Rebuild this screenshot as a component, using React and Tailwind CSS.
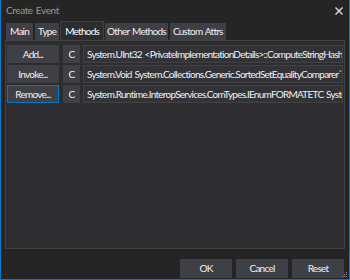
import React from "react";

const rows = [
  { label: "Add...", text: "System.UInt32 <PrivateImplementationDetails>::ComputeStringHash(System.String)" },
  { label: "Invoke...", text: "System.Void System.Collections.Generic.SortedSetEqualityComparer`1::.ctor()" },
  { label: "Remove...", text: "System.Runtime.InteropServices.ComTypes.IEnumFORMATETC System.Object", focused: true },
];

function App() {
  return (
    <div
      className="relative w-[350px] h-[280px] flex flex-col bg-[#252526] border-x border-b border-[#007acc] text-[10px] tracking-[-0.75px] [word-spacing:1px] text-[#f1f1f1] overflow-hidden"
      style={{ fontFamily: "Lato, 'DejaVu Sans', sans-serif" }}
    >
      <div className="h-[21px] shrink-0 flex items-center justify-between pl-[5px] pr-[6px] bg-[#252526]">
        <span className="text-[#999999] text-[10px] tracking-[-0.4px]">Create Event</span>
        <svg width="8" height="8" viewBox="0 0 8 8" className="text-[#e0e0e0]">
          <path d="M0.5 0.5 L7.5 7.5 M7.5 0.5 L0.5 7.5" stroke="currentColor" strokeWidth="1.4" />
        </svg>
      </div>

      <div className="flex-1 flex flex-col px-[4px]">
        <div className="flex items-end h-[19px] pl-[1px]">
          <div className="h-[17px] px-[4px] mr-[2px] flex items-center bg-[#3f3f46]">Main</div>
          <div className="h-[17px] px-[3px] mr-[1px] flex items-center bg-[#3f3f46]">Type</div>
          <div className="h-[19px] px-[4px] mr-[1px] flex items-center bg-[#2d2d30] border-x border-t border-[#3f3f46] text-white">
            Methods
          </div>
          <div className="h-[17px] px-[2px] mr-[2px] flex items-center bg-[#3f3f46]">Other Methods</div>
          <div className="h-[17px] px-[3px] flex items-center bg-[#3f3f46]">Custom Attrs</div>
        </div>

        <div className="h-[209px] border border-[#434346] bg-[#2d2d30] flex flex-col gap-[2px] pt-[4px] px-[1px]">
          {rows.map((r) => (
            <div key={r.label} className="flex items-center h-[18px]">
              <div
                className={`w-[52px] h-[18px] flex items-center justify-center bg-[#3f3f46] ${
                  r.focused ? "border border-[#007acc]" : ""
                }`}
              >
                {r.label}
              </div>
              <div className="w-[17px] h-[18px] ml-[4px] flex items-center justify-center bg-[#3f3f46]">C</div>
              <div className="flex-1 h-[18px] ml-[3px] flex items-center pl-[3px] bg-[#333337] border border-[#434346] whitespace-nowrap overflow-hidden">
                {r.text}
              </div>
            </div>
          ))}
        </div>

        <div className="flex justify-end gap-[4px] mt-[10px] pr-[1px]">
          {["OK", "Cancel", "Reset"].map((b) => (
            <div key={b} className="w-[52px] h-[19px] flex items-center justify-center bg-[#3f3f46]">
              {b}
            </div>
          ))}
        </div>
      </div>

      <svg width="7" height="7" viewBox="0 0 7 7" className="absolute right-[1px] bottom-[1px] text-[#9a9a9a]">
        <rect x="5" y="1" width="1" height="1" fill="currentColor" />
        <rect x="3" y="3" width="1" height="1" fill="currentColor" />
        <rect x="5" y="3" width="1" height="1" fill="currentColor" />
        <rect x="1" y="5" width="1" height="1" fill="currentColor" />
        <rect x="3" y="5" width="1" height="1" fill="currentColor" />
        <rect x="5" y="5" width="1" height="1" fill="currentColor" />
      </svg>
    </div>
  );
}

export default App;
